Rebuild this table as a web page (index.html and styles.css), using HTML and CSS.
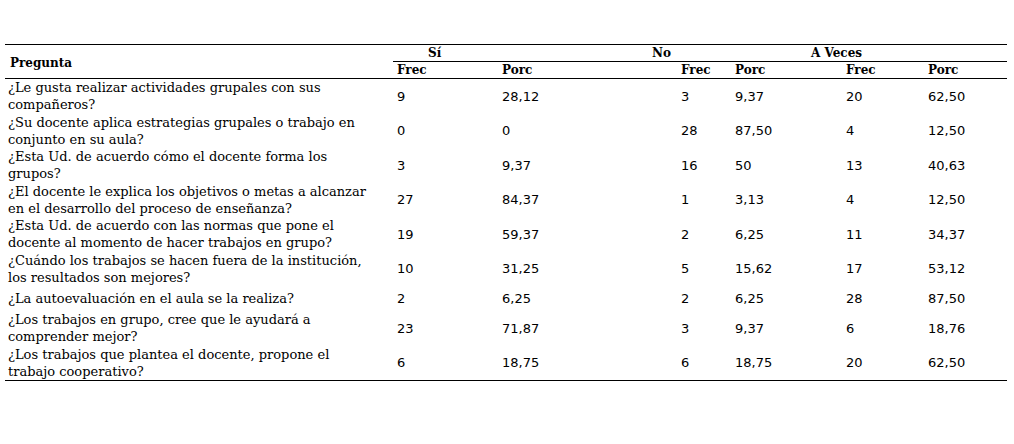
FILE: index.html
```html
<!DOCTYPE html>
<html lang="es">
<head>
<meta charset="utf-8">
<title>Tabla</title>
<link rel="stylesheet" href="styles.css">
</head>
<body>
<div class="table">
  <div class="thead">
    <div class="th-pregunta">Pregunta</div>
    <div class="groups">
      <span class="g g-si">Sí</span>
      <span class="g">No</span>
      <span class="g">A Veces</span>
    </div>
    <div class="sub">Frec</div>
    <div class="sub">Porc</div>
    <div class="sub">Frec</div>
    <div class="sub">Porc</div>
    <div class="sub">Frec</div>
    <div class="sub">Porc</div>
  </div>
  <div class="tbody">
    <div class="row"><div class="q">¿Le gusta realizar actividades grupales con sus compañeros?</div><div class="n">9</div><div class="n">28,12</div><div class="n">3</div><div class="n">9,37</div><div class="n">20</div><div class="n">62,50</div></div>
    <div class="row"><div class="q">¿Su docente aplica estrategias grupales o trabajo en conjunto en su aula?</div><div class="n">0</div><div class="n">0</div><div class="n">28</div><div class="n">87,50</div><div class="n">4</div><div class="n">12,50</div></div>
    <div class="row"><div class="q">¿Esta Ud. de acuerdo cómo el docente forma los grupos?</div><div class="n">3</div><div class="n">9,37</div><div class="n">16</div><div class="n">50</div><div class="n">13</div><div class="n">40,63</div></div>
    <div class="row"><div class="q">¿El docente le explica los objetivos o metas a alcanzar en el desarrollo del proceso de enseñanza?</div><div class="n">27</div><div class="n">84,37</div><div class="n">1</div><div class="n">3,13</div><div class="n">4</div><div class="n">12,50</div></div>
    <div class="row"><div class="q">¿Esta Ud. de acuerdo con las normas que pone el docente al momento de hacer trabajos en grupo?</div><div class="n">19</div><div class="n">59,37</div><div class="n">2</div><div class="n">6,25</div><div class="n">11</div><div class="n">34,37</div></div>
    <div class="row"><div class="q">¿Cuándo los trabajos se hacen fuera de la institución, los resultados son mejores?</div><div class="n">10</div><div class="n">31,25</div><div class="n">5</div><div class="n">15,62</div><div class="n">17</div><div class="n">53,12</div></div>
    <div class="row row-single"><div class="q">¿La autoevaluación en el aula se la realiza?</div><div class="n">2</div><div class="n">6,25</div><div class="n">2</div><div class="n">6,25</div><div class="n">28</div><div class="n">87,50</div></div>
    <div class="row"><div class="q">¿Los trabajos en grupo, cree que le ayudará a comprender mejor?</div><div class="n">23</div><div class="n">71,87</div><div class="n">3</div><div class="n">9,37</div><div class="n">6</div><div class="n">18,76</div></div>
    <div class="row"><div class="q">¿Los trabajos que plantea el docente, propone el trabajo cooperativo?</div><div class="n">6</div><div class="n">18,75</div><div class="n">6</div><div class="n">18,75</div><div class="n">20</div><div class="n">62,50</div></div>
  </div>
</div>
</body>
</html>
```
FILE: styles.css
```css
html, body {
  margin: 0;
  padding: 0;
  background: #ffffff;
  color: #000000;
}

.table {
  margin: 44px 0 0 5px;
  width: 1002px;
  font-family: "DejaVu Serif", serif;
}

.thead,
.row {
  display: grid;
  grid-template-columns: 388px 105px 179px 54px 111px 82px 83px;
}

.thead {
  border-top: 1px solid #000;
  border-bottom: 1px solid #000;
  grid-template-rows: 17px 16px;
  font-weight: bold;
  font-size: 12px;
}

.th-pregunta {
  grid-column: 1;
  grid-row: 1 / 3;
  display: flex;
  align-items: center;
  padding-left: 5px;
  padding-top: 2px;
}

.groups {
  grid-column: 2 / 8;
  grid-row: 1;
  border-bottom: 1px solid #000;
  display: grid;
  grid-template-columns: 259px 159px 1fr;
  align-items: center;
  line-height: 16px;
}

.g-si {
  padding-left: 35px;
}

.sub {
  grid-row: 2;
  padding-left: 4px;
  line-height: 16px;
}

.tbody {
  border-bottom: 1px solid #000;
}

.row {
  height: 34.5px;
  align-items: center;
}

.row-single {
  height: 25px;
}

.q {
  padding-left: 3px;
  padding-right: 15px;
  font-family: "DejaVu Serif", serif;
  font-size: 13px;
  line-height: 17px;
}

.n {
  padding-left: 4px;
  font-family: "DejaVu Sans", sans-serif;
  font-size: 13px;
  font-weight: normal;
}
```
